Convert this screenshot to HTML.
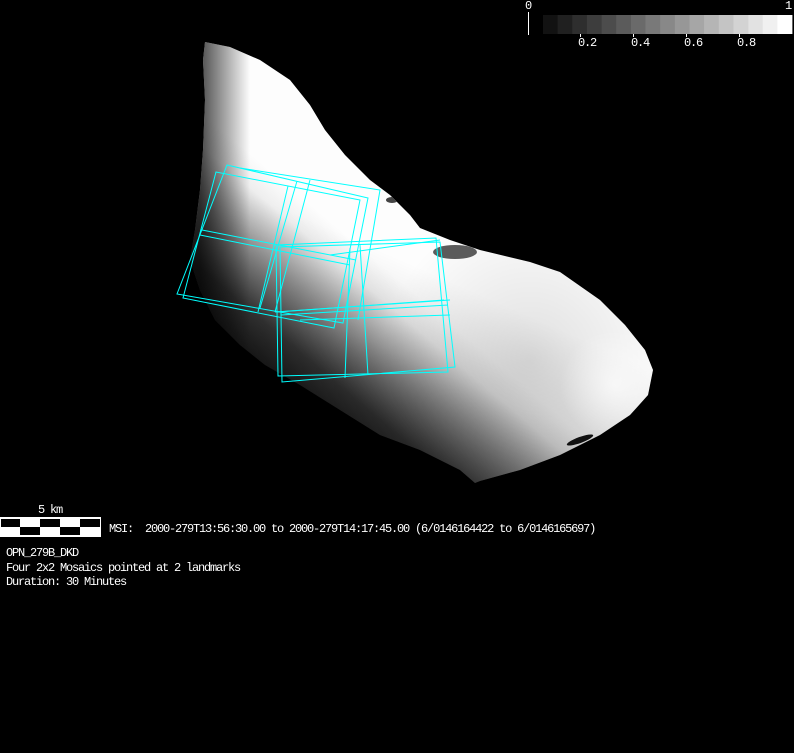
<!DOCTYPE html>
<html><head><meta charset="utf-8"><style>
html,body{margin:0;padding:0;background:#000;width:794px;height:753px;overflow:hidden}
svg{position:absolute;left:0;top:0}
.t{position:absolute;color:#fff;font-family:"Liberation Mono",monospace;font-size:12px;letter-spacing:-1.2px;line-height:12px;white-space:pre}
</style></head><body>
<svg width="794" height="753" viewBox="0 0 794 753">
<defs>
<linearGradient id="g1" gradientUnits="userSpaceOnUse" x1="230" y1="360" x2="340" y2="230">
<stop offset="0" stop-color="#111"/>
<stop offset="0.3" stop-color="#3a3a3a"/>
<stop offset="0.6" stop-color="#9a9a9a"/>
<stop offset="0.85" stop-color="#eeeeee"/>
<stop offset="1" stop-color="#fdfdfd"/>
</linearGradient>
<linearGradient id="g2" gradientUnits="userSpaceOnUse" x1="470" y1="480" x2="540" y2="320">
<stop offset="0" stop-color="#000" stop-opacity="0.35"/>
<stop offset="0.5" stop-color="#000" stop-opacity="0.12"/>
<stop offset="1" stop-color="#000" stop-opacity="0.0"/>
</linearGradient>
<radialGradient id="g5" cx="530" cy="360" r="150" gradientUnits="userSpaceOnUse">
<stop offset="0" stop-color="#000" stop-opacity="0.12"/>
<stop offset="1" stop-color="#000" stop-opacity="0"/>
</radialGradient>
<radialGradient id="g3" cx="615" cy="385" r="55" gradientUnits="userSpaceOnUse">
<stop offset="0" stop-color="#fff" stop-opacity="0.7"/>
<stop offset="1" stop-color="#fff" stop-opacity="0"/>
</radialGradient>
<linearGradient id="g4" gradientUnits="userSpaceOnUse" x1="200" y1="80" x2="250" y2="80">
<stop offset="0" stop-color="#000" stop-opacity="0.7"/>
<stop offset="1" stop-color="#000" stop-opacity="0"/>
</linearGradient>
<clipPath id="cp"><path d="M205,42 L230,47 L260,60 L290,80 L310,105 L325,130 L345,155 L370,180 L390,195 L410,215 L420,228 L450,240 L480,250 L530,262 L560,272 L600,300 L625,325 L645,350 L653,370 L648,395 L630,415 L600,435 L560,455 L520,470 L480,481 L475,483 L460,470 L420,450 L380,435 L340,410 L300,385 L265,365 L240,345 L215,320 L200,290 L190,260 L195,230 L200,190 L203,150 L205,100 L203,60 Z"/></clipPath>
</defs>
<g clip-path="url(#cp)">
<rect width="794" height="753" fill="url(#g1)"/>
<rect width="794" height="753" fill="url(#g2)"/>
<rect width="794" height="753" fill="url(#g5)"/>
<rect width="794" height="753" fill="url(#g3)"/>
<rect x="0" y="0" width="260" height="400" fill="url(#g4)"/>
<ellipse cx="455" cy="252" rx="22" ry="7" fill="#333" opacity="0.8"/>
<ellipse cx="392" cy="200" rx="6" ry="3" fill="#444"/>
<ellipse cx="580" cy="440" rx="14" ry="3" fill="#111" transform="rotate(-20 580 440)"/>
</g>
<g fill="none" stroke="#0ff" stroke-width="1">
<path d="M227,165 L368,198 L343,323 L177,294 Z M297,181 L260,308 M202,230 L356,260"/>
<path d="M216,172 L360,200 L334,328 L183,298 Z M288,186 L258,312 M200,235 L350,265"/>
<path d="M240,168 L380,190 L358,320 M310,180 L275,312"/>
<path d="M280,247 L440,242 L455,367 L282,382 Z M360,245 L368,375 M281,315 L448,305"/>
<path d="M276,245 L436,238 L448,372 L278,376 Z M350,248 L345,378 M277,312 L444,300"/>
<path d="M330,255 L440,240 M275,312 L450,300 M300,320 L450,315"/>
</g>
<g>
<rect x="543" y="15" width="15" height="19" fill="#121212"/>
<rect x="557.6" y="15" width="15" height="19" fill="#202020"/>
<rect x="572.3" y="15" width="15" height="19" fill="#2e2e2e"/>
<rect x="586.9" y="15" width="15" height="19" fill="#3d3d3d"/>
<rect x="601.6" y="15" width="15" height="19" fill="#4c4c4c"/>
<rect x="616.2" y="15" width="15" height="19" fill="#5b5b5b"/>
<rect x="630.9" y="15" width="15" height="19" fill="#6a6a6a"/>
<rect x="645.5" y="15" width="15" height="19" fill="#797979"/>
<rect x="660.2" y="15" width="15" height="19" fill="#888"/>
<rect x="674.8" y="15" width="15" height="19" fill="#979797"/>
<rect x="689.5" y="15" width="15" height="19" fill="#a6a6a6"/>
<rect x="704.1" y="15" width="15" height="19" fill="#b5b5b5"/>
<rect x="718.8" y="15" width="15" height="19" fill="#c4c4c4"/>
<rect x="733.4" y="15" width="15" height="19" fill="#d3d3d3"/>
<rect x="748.1" y="15" width="15" height="19" fill="#e2e2e2"/>
<rect x="762.7" y="15" width="15" height="19" fill="#f0f0f0"/>
<rect x="777.4" y="15" width="15" height="19" fill="#fff"/>
<path d="M528.5,12 V35 M580.5,34 V37 M633.5,34 V37 M686.5,34 V37 M739.5,34 V37" stroke="#fff" stroke-width="1"/>
</g>
<rect x="0.5" y="517.5" width="100" height="19" fill="#fff" stroke="#fff"/>
<g fill="#000">
<rect x="1" y="519" width="19" height="8"/><rect x="40" y="519" width="20" height="8"/><rect x="80" y="519" width="20" height="8"/>
<rect x="20" y="527" width="20" height="8"/><rect x="60" y="527" width="20" height="8"/>
</g>
</svg>
<div class="t" style="left:525px;top:0px">0</div>
<div class="t" style="left:785px;top:0px">1</div>
<div class="t" style="left:578px;top:37px">0.2</div>
<div class="t" style="left:631px;top:37px">0.4</div>
<div class="t" style="left:684px;top:37px">0.6</div>
<div class="t" style="left:737px;top:37px">0.8</div>
<div class="t" style="left:38px;top:504px">5 km</div>
<div class="t" style="left:109px;top:523px">MSI:  2000-279T13:56:30.00 to 2000-279T14:17:45.00 (6/0146164422 to 6/0146165697)</div>
<div class="t" style="left:6px;top:547px">OPN_279B_DKD</div>
<div class="t" style="left:6px;top:562px">Four 2x2 Mosaics pointed at 2 landmarks</div>
<div class="t" style="left:6px;top:576px">Duration: 30 Minutes</div>
</body></html>
